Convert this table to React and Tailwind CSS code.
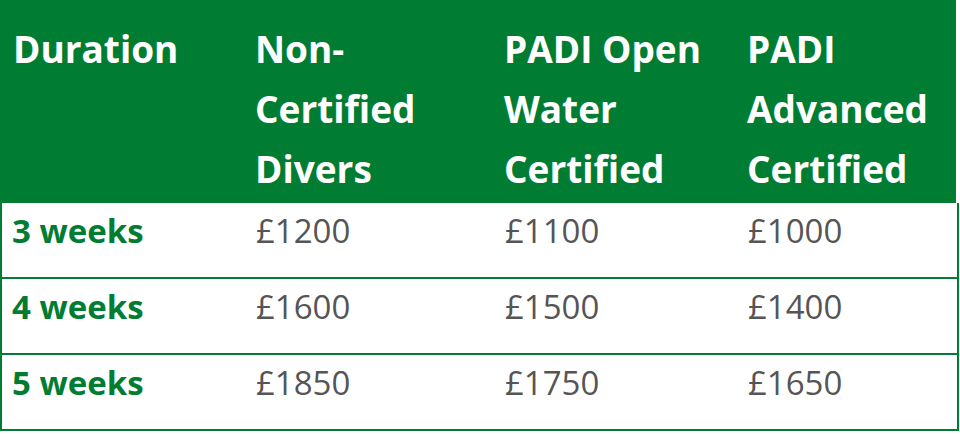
const headers = [
    ["Duration"],
    ["Non-", "Certified", "Divers"],
    ["PADI Open", "Water", "Certified"],
    ["PADI", "Advanced", "Certified"],
];

const rows = [
    ["3 weeks", "£1200", "£1100", "£1000"],
    ["4 weeks", "£1600", "£1500", "£1400"],
    ["5 weeks", "£1850", "£1750", "£1650"],
];

const App = () => {
    return (
        <div className="bg-white w-[960px] h-[434px] font-['Open_Sans',sans-serif]">
            {/* Header row */}
            <div className="w-[956px] bg-[#007d32] text-white font-bold text-[37px] grid grid-cols-[244px_249px_243px_1fr] pt-[19px] pb-[4px] leading-[60px]">
                {headers.map((lines, i) => (
                    <div key={i} className={i === 0 ? "pl-[13px]" : "pl-[11px]"}>
                        {lines.map((line) => (
                            <div key={line} className="whitespace-nowrap">{line}</div>
                        ))}
                    </div>
                ))}
            </div>

            {/* Price rows */}
            <div className="w-[959px] border-x-2 border-b-2 border-[#007d32] text-[33px]">
                {rows.map((row, r) => (
                    <div
                        key={row[0]}
                        className={`grid grid-cols-[242px_249px_243px_1fr] h-[74px] leading-[50px] pt-[3px] ${
                            r > 0 ? "border-t-2 border-[#007d32] h-[76px]" : ""
                        }`}
                    >
                        {row.map((cell, c) => (
                            <div
                                key={c}
                                className={`${c === 0 ? "pl-[10px] font-bold text-[#007d32]" : "pl-3 text-[#555555]"}`}
                            >
                                {cell}
                            </div>
                        ))}
                    </div>
                ))}
            </div>
        </div>
    );
};

export default App;
